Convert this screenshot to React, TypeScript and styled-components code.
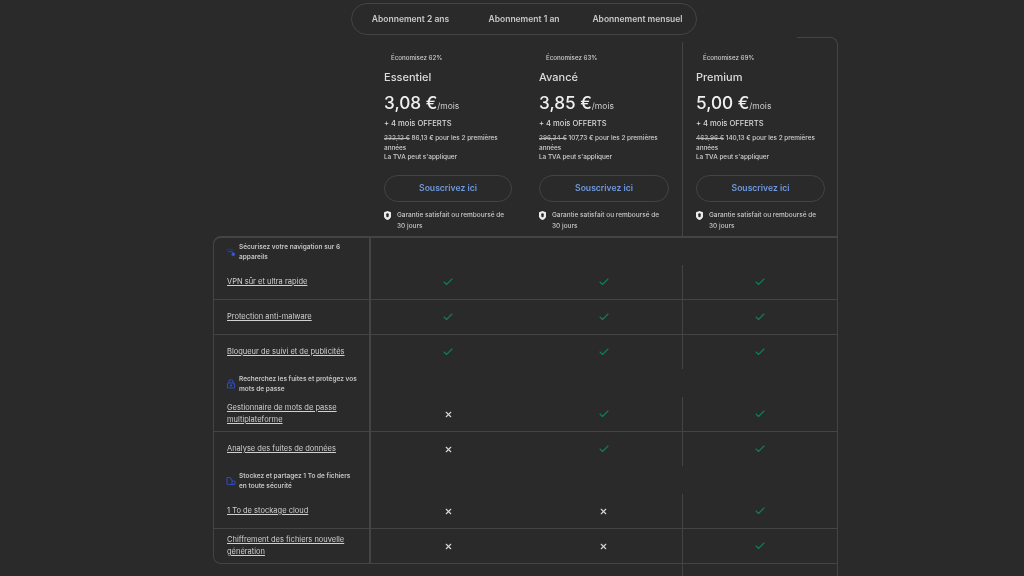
import React from "react";
import styled, { createGlobalStyle } from "styled-components";
import { Check, X } from "lucide-react";

const line = "#444444";

const GlobalStyle = createGlobalStyle`
  html, body {
    margin: 0;
    height: 576px;
    overflow: hidden;
    background: #2a2a2a;
    color: #e4e4e4;
    font-family: Inter, "Liberation Sans", sans-serif;
  }
`;

const Page = styled.div`
  width: 625px;
  margin-left: 213px;
  padding-top: 3px;
  box-sizing: border-box;
  filter: blur(0.35px);
`;

const Tabs = styled.div`
  display: grid;
  grid-template-columns: repeat(3, 113.5px);
  justify-content: center;
  align-items: center;
  width: 346px;
  height: 32px;
  margin-left: 138px;
  box-sizing: border-box;
  border: 1px solid ${line};
  border-radius: 16px;
`;

const Tab = styled.div`
  text-align: center;
  font-size: 8.5px;
  font-weight: 600;
  color: #c8c8c8;
  white-space: nowrap;
`;

const Plans = styled.div`
  display: grid;
  grid-template-columns: 155px 157px 156px;
  margin-top: 2px;
  margin-left: 157px;
  height: 199px;
`;

const Plan = styled.div<{ $last?: boolean }>`
  position: relative;
  box-sizing: border-box;
  padding: 16px 13px 0 14px;

  ${(p) =>
    p.$last &&
    `
    &::before {
      content: "";
      position: absolute;
      left: 0;
      top: 5px;
      bottom: 0;
      border-left: 1px solid ${line};
    }
    &::after {
      content: "";
      position: absolute;
      right: 0;
      top: 0;
      bottom: 0;
      width: 40px;
      border-top: 1px solid ${line};
      border-right: 1px solid ${line};
      border-top-right-radius: 8px;
    }
  `}
`;

const Savings = styled.div`
  padding-left: 7px;
  font-size: 6.2px;
  line-height: 10px;
  font-weight: 500;
  color: #cfcfcf;
`;

const PlanName = styled.div`
  margin-top: 6px;
  font-size: 11px;
  line-height: 16px;
  font-weight: 500;
  color: #dcdcdc;
`;

const Price = styled.div`
  margin-top: 7px;
  font-size: 17.2px;
  line-height: 22px;
  font-weight: 500;
  color: #f0f0f0;
  white-space: nowrap;
`;

const PerMonth = styled.span`
  font-size: 8.5px;
  font-weight: 400;
  color: #cccccc;
`;

const Offer = styled.div`
  margin-top: 2px;
  font-size: 7.6px;
  line-height: 10px;
  font-weight: 500;
  color: #d8d8d8;
`;

const Details = styled.div`
  margin-top: 5px;
  font-size: 6.4px;
  line-height: 9.5px;
  font-weight: 500;
  color: #d0d0d0;

  s {
    color: #b8b8b8;
  }
`;

const Subscribe = styled.button`
  display: block;
  width: 100%;
  height: 27px;
  margin-top: 12px;
  padding: 0;
  background: transparent;
  border: 1px solid ${line};
  border-radius: 13.5px;
  font-family: inherit;
  font-size: 8.6px;
  font-weight: 600;
  color: #6f9ae0;
`;

const Guarantee = styled.div`
  display: flex;
  gap: 6px;
  margin-top: 8.5px;
  font-size: 6.5px;
  line-height: 11px;
  font-weight: 500;
  color: #c8c8c8;

  svg {
    flex: none;
    width: 7px;
    height: 9px;
    margin-top: 1px;
  }
`;

const Row = styled.div<{ $height: number; $divided?: boolean }>`
  display: grid;
  grid-template-columns: 157px 154px 157px 1fr;
  box-sizing: border-box;
  height: ${(p) => p.$height}px;
  border-bottom: ${(p) => (p.$divided ? `1px solid ${line}` : "none")};
`;

const LabelCell = styled.div`
  display: flex;
  align-items: center;
  box-sizing: border-box;
  padding: 0 11px 0 13px;
  border-right: 2px solid ${line};
`;

const FeatureLink = styled.a`
  font-size: 7.5px;
  line-height: 12px;
  font-weight: 400;
  color: #d0d0d0;
  text-decoration: underline;
`;

const GroupLabel = styled.div`
  display: flex;
  align-items: center;
  gap: 3px;
  margin-left: -1px;
  padding-top: 2px;
  font-size: 6.5px;
  line-height: 10px;
  font-weight: 600;
  color: #c4c4c4;

  svg {
    flex: none;
    width: 10px;
    height: 10px;
  }
`;

const Table = styled.div`
  box-sizing: border-box;
  border: 1px solid ${line};
  border-top-width: 2px;
  border-radius: 8px 0 0 8px;
  height: 328px;

  > :first-child ${GroupLabel} {
    padding-top: 0;
  }
`;

const MarkCell = styled.div<{ $divider?: boolean }>`
  display: flex;
  align-items: center;
  justify-content: center;
  border-left: ${(p) => (p.$divider ? `1px solid ${line}` : "none")};
`;

const Tail = styled.div`
  box-sizing: border-box;
  width: 156px;
  height: 12px;
  margin-left: 469px;
  border-left: 1px solid ${line};
  border-right: 1px solid ${line};
`;

const ShieldIcon = () => (
  <svg viewBox="0 0 14 18">
    <path d="M0 2.5 7 0l7 2.5V11c0 3.2-3.4 5.6-7 7-3.6-1.4-7-3.8-7-7z" fill="#ececec" />
    <rect x="4.6" y="4.5" width="4.8" height="8" rx="2.2" fill="#2a2a2a" />
  </svg>
);

const WifiIcon = () => (
  <svg viewBox="0 0 20 20" fill="none" strokeLinecap="round">
    <path d="M1 6c5-3 10-2 14 1" stroke="#23367f" strokeWidth="2.2" />
    <path d="M4 10c3-2 7-1 10 1" stroke="#2b42a0" strokeWidth="2.2" />
    <circle cx="14.5" cy="14.5" r="3.5" fill="#3557d6" />
  </svg>
);

const LockIcon = () => (
  <svg viewBox="0 0 20 20" fill="none" stroke="#2f4bb8" strokeWidth="2.4">
    <rect x="3" y="8" width="14" height="10" rx="2" />
    <path d="M6 8V5.5a4 4 0 0 1 8 0V8" />
    <circle cx="10" cy="13" r="1.2" fill="#2f4bb8" />
  </svg>
);

const CloudIcon = () => (
  <svg viewBox="0 0 20 20" fill="none" stroke="#2f4bb8" strokeWidth="2.2" strokeLinejoin="round">
    <path d="M2 3h6l4 5v9H4a2 2 0 0 1-2-2z" />
    <path d="M12 10h3a3 3 0 0 1 0 7h-3" />
  </svg>
);

const Mark = ({ yes }: { yes: boolean }) =>
  yes ? (
    <Check size={12} strokeWidth={2.2} color="#0f8055" />
  ) : (
    <X size={9} strokeWidth={3} color="#d8d8d8" />
  );

type Plan = {
  savings: string;
  name: string;
  price: string;
  oldPrice: string;
  newPrice: string;
};

const plans: Plan[] = [
  { savings: "Économisez 62%", name: "Essentiel", price: "3,08 €", oldPrice: "232,12 €", newPrice: "86,13 €" },
  { savings: "Économisez 63%", name: "Avancé", price: "3,85 €", oldPrice: "296,34 €", newPrice: "107,73 €" },
  { savings: "Économisez 69%", name: "Premium", price: "5,00 €", oldPrice: "463,96 €", newPrice: "140,13 €" },
];

type TableRow =
  | { kind: "group"; height: number; icon: React.ReactNode; title: string }
  | { kind: "feature"; height: number; label: string; marks: boolean[]; divided?: boolean };

const rows: TableRow[] = [
  { kind: "group", height: 27, icon: <WifiIcon />, title: "Sécurisez votre navigation sur 6 appareils" },
  { kind: "feature", height: 35, label: "VPN sûr et ultra rapide", marks: [true, true, true], divided: true },
  { kind: "feature", height: 35, label: "Protection anti-malware", marks: [true, true, true], divided: true },
  { kind: "feature", height: 34, label: "Bloqueur de suivi et de publicités", marks: [true, true, true] },
  { kind: "group", height: 28, icon: <LockIcon />, title: "Recherchez les fuites et protégez vos mots de passe" },
  { kind: "feature", height: 35, label: "Gestionnaire de mots de passe multiplateforme", marks: [false, true, true], divided: true },
  { kind: "feature", height: 34, label: "Analyse des fuites de données", marks: [false, true, true] },
  { kind: "group", height: 28, icon: <CloudIcon />, title: "Stockez et partagez 1 To de fichiers en toute sécurité" },
  { kind: "feature", height: 35, label: "1 To de stockage cloud", marks: [false, false, true], divided: true },
  { kind: "feature", height: 34, label: "Chiffrement des fichiers nouvelle génération", marks: [false, false, true] },
];

export default function App() {
  return (
    <Page>
      <GlobalStyle />
      <Tabs>
        <Tab>Abonnement 2 ans</Tab>
        <Tab>Abonnement 1 an</Tab>
        <Tab>Abonnement mensuel</Tab>
      </Tabs>

      <Plans>
        {plans.map((plan, i) => (
          <Plan key={plan.name} $last={i === plans.length - 1}>
            <Savings>{plan.savings}</Savings>
            <PlanName>{plan.name}</PlanName>
            <Price>
              {plan.price}
              <PerMonth>/mois</PerMonth>
            </Price>
            <Offer>+ 4 mois OFFERTS</Offer>
            <Details>
              <s>{plan.oldPrice}</s> {plan.newPrice} pour les 2 premières
              <br />
              années
              <br />
              La TVA peut s'appliquer
            </Details>
            <Subscribe>Souscrivez ici</Subscribe>
            <Guarantee>
              <ShieldIcon />
              <span>Garantie satisfait ou remboursé de 30 jours</span>
            </Guarantee>
          </Plan>
        ))}
      </Plans>

      <Table>
        {rows.map((row, i) =>
          row.kind === "group" ? (
            <Row key={i} $height={row.height}>
              <LabelCell>
                <GroupLabel>
                  {row.icon}
                  <span>{row.title}</span>
                </GroupLabel>
              </LabelCell>
            </Row>
          ) : (
            <Row key={i} $height={row.height} $divided={row.divided}>
              <LabelCell>
                <FeatureLink>{row.label}</FeatureLink>
              </LabelCell>
              {row.marks.map((yes, j) => (
                <MarkCell key={j} $divider={j === 2}>
                  <Mark yes={yes} />
                </MarkCell>
              ))}
            </Row>
          )
        )}
      </Table>
      <Tail />
    </Page>
  );
}
